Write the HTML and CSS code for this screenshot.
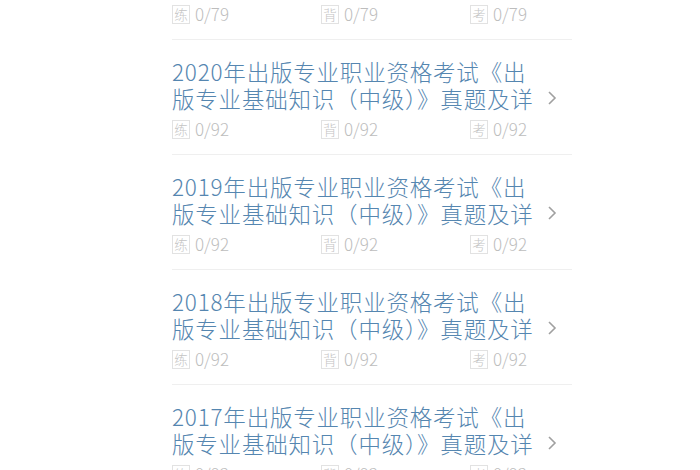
FILE: index.html
```html
<!DOCTYPE html>
<html lang="zh">
<head>
<meta charset="utf-8">
<link rel="stylesheet" href="styles.css">
</head>
<body>
<div class="list">
  <div class="item">
    <div class="head">
      <div class="title"><span class="line">2021年出版专业职业资格考试《出</span><span class="line">版专业基础知识（中级）》真题及详</span></div>
      <span class="chev"><svg width="10" height="16" viewBox="0 0 10 16"><path d="M2 2 L8 8 L2 14" fill="none" stroke="#a0a0a0" stroke-width="1.6"/></svg></span>
    </div>
    <div class="stats">
      <div class="stat"><span class="tag">练</span><span class="num">0/79</span></div>
      <div class="stat"><span class="tag">背</span><span class="num">0/79</span></div>
      <div class="stat"><span class="tag">考</span><span class="num">0/79</span></div>
    </div>
  </div>
  <div class="item">
    <div class="head">
      <div class="title"><span class="line">2020年出版专业职业资格考试《出</span><span class="line">版专业基础知识（中级）》真题及详</span></div>
      <span class="chev"><svg width="10" height="16" viewBox="0 0 10 16"><path d="M2 2 L8 8 L2 14" fill="none" stroke="#a0a0a0" stroke-width="1.6"/></svg></span>
    </div>
    <div class="stats">
      <div class="stat"><span class="tag">练</span><span class="num">0/92</span></div>
      <div class="stat"><span class="tag">背</span><span class="num">0/92</span></div>
      <div class="stat"><span class="tag">考</span><span class="num">0/92</span></div>
    </div>
  </div>
  <div class="item">
    <div class="head">
      <div class="title"><span class="line">2019年出版专业职业资格考试《出</span><span class="line">版专业基础知识（中级）》真题及详</span></div>
      <span class="chev"><svg width="10" height="16" viewBox="0 0 10 16"><path d="M2 2 L8 8 L2 14" fill="none" stroke="#a0a0a0" stroke-width="1.6"/></svg></span>
    </div>
    <div class="stats">
      <div class="stat"><span class="tag">练</span><span class="num">0/92</span></div>
      <div class="stat"><span class="tag">背</span><span class="num">0/92</span></div>
      <div class="stat"><span class="tag">考</span><span class="num">0/92</span></div>
    </div>
  </div>
  <div class="item">
    <div class="head">
      <div class="title"><span class="line">2018年出版专业职业资格考试《出</span><span class="line">版专业基础知识（中级）》真题及详</span></div>
      <span class="chev"><svg width="10" height="16" viewBox="0 0 10 16"><path d="M2 2 L8 8 L2 14" fill="none" stroke="#a0a0a0" stroke-width="1.6"/></svg></span>
    </div>
    <div class="stats">
      <div class="stat"><span class="tag">练</span><span class="num">0/92</span></div>
      <div class="stat"><span class="tag">背</span><span class="num">0/92</span></div>
      <div class="stat"><span class="tag">考</span><span class="num">0/92</span></div>
    </div>
  </div>
  <div class="item">
    <div class="head">
      <div class="title"><span class="line">2017年出版专业职业资格考试《出</span><span class="line">版专业基础知识（中级）》真题及详</span></div>
      <span class="chev"><svg width="10" height="16" viewBox="0 0 10 16"><path d="M2 2 L8 8 L2 14" fill="none" stroke="#a0a0a0" stroke-width="1.6"/></svg></span>
    </div>
    <div class="stats">
      <div class="stat"><span class="tag">练</span><span class="num">0/92</span></div>
      <div class="stat"><span class="tag">背</span><span class="num">0/92</span></div>
      <div class="stat"><span class="tag">考</span><span class="num">0/92</span></div>
    </div>
  </div>
</div>
</body>
</html>
```
FILE: styles.css
```css
html, body {
  margin: 0;
  padding: 0;
  background: #ffffff;
  height: 470px;
  overflow: hidden;
}
body {
  font-family: "Noto Sans CJK SC", "Noto Sans", sans-serif;
}
.list {
  width: 400px;
  margin: -75px 0 0 172px;
  display: flex;
  flex-direction: column;
}
.item {
  padding: 18px 0 13px 0;
  border-bottom: 1px solid #efefef;
  display: flex;
  flex-direction: column;
}
.head {
  display: flex;
  align-items: flex-end;
  justify-content: space-between;
}
.title {
  display: flex;
  flex-direction: column;
  color: #5586b0;
  font-size: 22.5px;
  line-height: 26.5px;
  letter-spacing: 0.8px;
  font-weight: 300;
}
.line {
  white-space: nowrap;
}
.chev {
  display: flex;
  align-items: center;
  height: 26.5px;
  margin-right: 15px;
}
.stats {
  display: flex;
  margin-top: 6px;
  height: 24px;
  align-items: center;
}
.stat {
  flex: none;
  width: 149px;
  display: flex;
  align-items: center;
}
.tag {
  width: 16px;
  height: 17px;
  border: 1px solid #e2e2e2;
  color: #c4c4c4;
  font-size: 13.5px;
  line-height: 17px;
  text-align: center;
  box-sizing: content-box;
  font-weight: 300;
}
.num {
  margin-left: 5px;
  color: #bdbdbd;
  font-size: 17px;
  line-height: 20px;
  font-weight: 300;
}
```
